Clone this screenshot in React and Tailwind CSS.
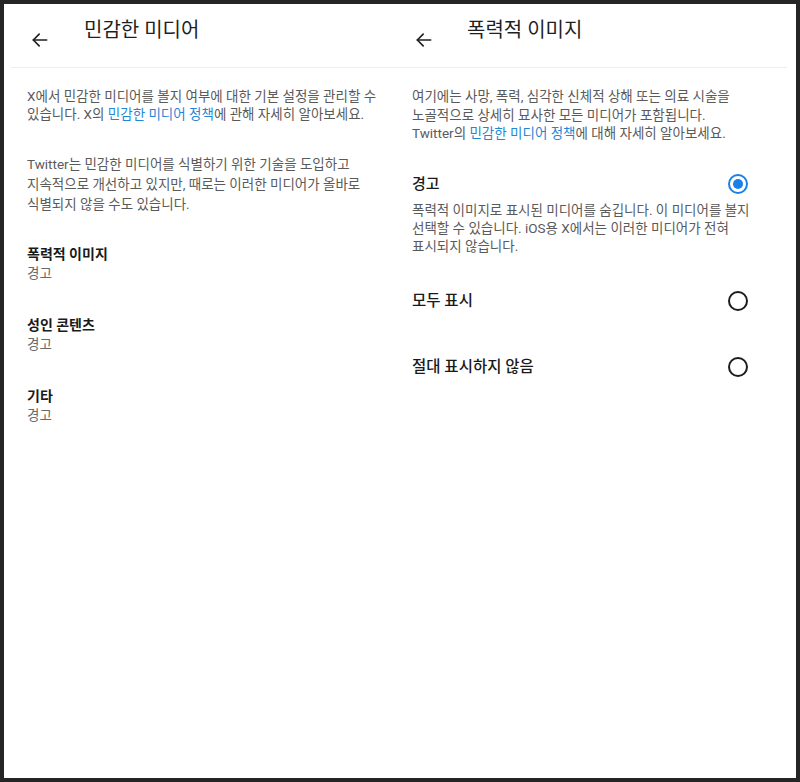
import React from "react";

const FONT = { fontFamily: 'Roboto, "Noto Sans CJK KR", sans-serif' };

function Arrow() {
  return (
    <svg width="20" height="20" viewBox="0 0 24 24" fill="none" stroke="#1f1f1f" strokeWidth="2" strokeLinecap="round" strokeLinejoin="round">
      <path d="M20 12H4" />
      <path d="M11 5l-7 7 7 7" />
    </svg>
  );
}

function Radio({ checked }) {
  if (checked) {
    return (
      <div className="w-[20px] h-[20px] rounded-full border-2 border-[#1a7fe6] flex items-center justify-center">
        <div className="w-[10px] h-[10px] rounded-full bg-[#1a7fe6]" />
      </div>
    );
  }
  return <div className="w-[20px] h-[20px] rounded-full border-2 border-[#1c1c1c]" />;
}

function Link({ children }) {
  return <span className="text-[#1f88d6]">{children}</span>;
}

function Item({ title, sub }) {
  return (
    <div className="flex flex-col">
      <div className="text-[14px] leading-[19px] font-bold text-[#1a1a1a]">{title}</div>
      <div className="text-[13.5px] leading-[19px] text-[#6a6a6a]">{sub}</div>
    </div>
  );
}

export default function App() {
  return (
    <div className="w-[800px] h-[782px] bg-[#252525] p-[4px]" style={FONT}>
      <div className="w-full h-full bg-white flex">
        {/* Left panel */}
        <div className="w-[396px] h-full flex flex-col">
          <div className="h-[64px] ml-[7px] border-b border-[#efefef] flex items-start">
            <div className="mt-[26px] ml-[19px]"><Arrow /></div>
            <div className="ml-[34px] mt-[12px] text-[20px] leading-[28px] text-[#1f1f1f] whitespace-nowrap">민감한 미디어</div>
          </div>
          <div className="pl-[23px] flex flex-col">
            <p className="mt-[19px] text-[13.5px] leading-[18px] text-[#5a5a5a] whitespace-nowrap">
              X에서 민감한 미디어를 볼지 여부에 대한 기본 설정을 관리할 수<br />
              있습니다. X의 <Link>민감한 미디어 정책</Link>에 관해 자세히 알아보세요.
            </p>
            <p className="mt-[31px] text-[13.5px] leading-[20px] text-[#5a5a5a] whitespace-nowrap">
              Twitter는 민감한 미디어를 식별하기 위한 기술을 도입하고<br />
              지속적으로 개선하고 있지만, 때로는 이러한 미디어가 올바로<br />
              식별되지 않을 수도 있습니다.
            </p>
            <div className="mt-[31px] flex flex-col gap-[33px]">
              <Item title="폭력적 이미지" sub="경고" />
              <Item title="성인 콘텐츠" sub="경고" />
              <Item title="기타" sub="경고" />
            </div>
          </div>
        </div>
        {/* Right panel */}
        <div className="w-[396px] h-full flex flex-col">
          <div className="h-[64px] mr-[9px] border-b border-[#efefef] flex items-start">
            <div className="mt-[26px] ml-[14px]"><Arrow /></div>
            <div className="ml-[33px] mt-[12px] text-[20px] leading-[28px] text-[#1f1f1f] whitespace-nowrap">폭력적 이미지</div>
          </div>
          <div className="pl-[12px] pr-[48px] flex flex-col">
            <p className="mt-[19px] text-[13.5px] leading-[18.5px] text-[#5a5a5a] whitespace-nowrap">
              여기에는 사망, 폭력, 심각한 신체적 상해 또는 의료 시술을<br />
              노골적으로 상세히 묘사한 모든 미디어가 포함됩니다.<br />
              Twitter의 <Link>민감한 미디어 정책</Link>에 대해 자세히 알아보세요.
            </p>
            <div className="mt-[30px] flex items-center justify-between">
              <div className="text-[15px] leading-[22px] font-medium text-[#1a1a1a]">경고</div>
              <Radio checked />
            </div>
            <p className="mt-[6px] text-[13.5px] leading-[18px] text-[#5a5a5a] whitespace-nowrap">
              폭력적 이미지로 표시된 미디어를 숨깁니다. 이 미디어를 볼지<br />
              선택할 수 있습니다. iOS용 X에서는 이러한 미디어가 전혀<br />
              표시되지 않습니다.
            </p>
            <div className="mt-[35px] flex items-center justify-between">
              <div className="text-[15.5px] leading-[22px] font-medium text-[#1a1a1a]">모두 표시</div>
              <Radio />
            </div>
            <div className="mt-[44px] flex items-center justify-between">
              <div className="text-[15.5px] leading-[22px] font-medium text-[#1a1a1a]">절대 표시하지 않음</div>
              <Radio />
            </div>
          </div>
        </div>
      </div>
    </div>
  );
}
